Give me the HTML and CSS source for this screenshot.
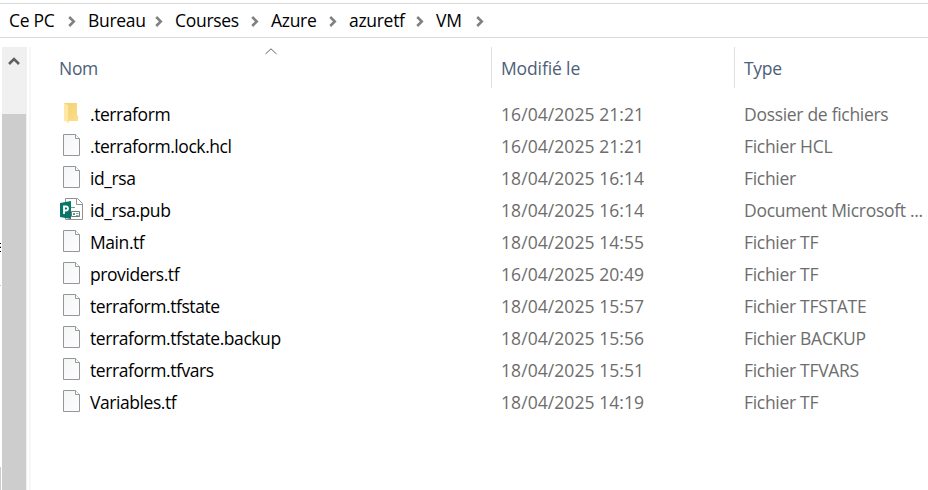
FILE: index.html
```html
<!DOCTYPE html>
<html lang="fr">
<head>
<meta charset="utf-8">
<title>VM</title>
<link rel="stylesheet" href="styles.css">
</head>
<body>
<svg class="defs" width="0" height="0">
  <defs>
    <linearGradient id="paper" x2="1" y2="1"><stop stop-color="#f4f5f6"/><stop offset="1" stop-color="#fdfdfe"/></linearGradient>
    <linearGradient id="gold" x2="1" y2="1"><stop stop-color="#f3cf70"/><stop offset="1" stop-color="#fbdf8c"/></linearGradient>
    <symbol id="chev" viewBox="0 0 8 11"><path d="M1.2 1 5.8 5.5 1.2 10" fill="none" stroke="#808080" stroke-width="2.5"/></symbol>
    <symbol id="file" viewBox="0 0 24 24"><path d="M3.5 1.5H15.5L19.5 5.5V22.5H3.5Z" fill="url(#paper)" stroke="#949698"/><path d="M15.5 1.5V5.5H19.5" fill="#fff" stroke="#949698"/></symbol>
    <symbol id="folder" viewBox="0 0 24 24"><g transform="translate(0 2)"><path d="M4 0H17V12L18 13V18H8L4 16Z" fill="url(#gold)"/><path d="M4 0 9 3V20.5L4 17.500Z" fill="#ffe8a6"/><path d="M8.500 3V18" stroke="#f3d27c" stroke-width=".7"/></g></symbol>
    <symbol id="pub" viewBox="0 0 24 24"><path d="M5.500 1.500H17.500L22.500 6.500V22.500H5.500Z" fill="#fff" stroke="#929292"/><path d="M16.500 1.500V7.500H22.500" fill="none" stroke="#929292"/><path d="M11 10.500H15" stroke="#65a99b"/><path d="M11.500 14.500H19.500V19.500H11.500Z" fill="none" stroke="#777"/><path d="M13 16H15V18H13Z" fill="#4ca28f"/><path d="M16 16.500H18.500M16 18.500H18.500" stroke="#4ca28f" stroke-width=".8"/><path d="M0 6 11 4V22L0 20Z" fill="#077568"/><path d="M4 17V9.500H6A2 2 0 0 1 6 13.500H4" fill="none" stroke="#fff" stroke-width="1.800"/></symbol>
  </defs>
</svg>
<nav class="path">
  <div class="crumb"><span>Ce PC</span><svg><use href="#chev"/></svg></div>
  <div class="crumb"><span>Bureau</span><svg><use href="#chev"/></svg></div>
  <div class="crumb"><span>Courses</span><svg><use href="#chev"/></svg></div>
  <div class="crumb"><span>Azure</span><svg><use href="#chev"/></svg></div>
  <div class="crumb"><span>azuretf</span><svg><use href="#chev"/></svg></div>
  <div class="crumb"><span>VM</span><svg><use href="#chev"/></svg></div>
</nav>
<main class="main">
  <div class="edge"><i class="ink"></i><i class="dot"></i><i class="stub"></i></div>
  <div class="scroll"><svg class="up" viewBox="0 0 12 10"><path d="M1 8 6 3 11 8" fill="none" stroke="#606060" stroke-width="2.600"/></svg><div class="thumb"></div></div>
  <div class="divider"></div>
  <section class="list">
    <div class="row head"><div>Nom</div><div>Modifié le</div><div>Type</div><svg class="sort" viewBox="0 0 12 7"><path d="M.5 6 6 .8 11.500 6" fill="none" stroke="#666"/></svg></div>
    <div class="row"><div class="name"><svg><use href="#folder"/></svg><span>.terraform</span></div><div class="date">16/04/2025 21:21</div><div class="type">Dossier de fichiers</div></div>
    <div class="row"><div class="name"><svg><use href="#file"/></svg><span>.terraform.lock.hcl</span></div><div class="date">16/04/2025 21:21</div><div class="type">Fichier HCL</div></div>
    <div class="row"><div class="name"><svg><use href="#file"/></svg><span>id_rsa</span></div><div class="date">18/04/2025 16:14</div><div class="type">Fichier</div></div>
    <div class="row"><div class="name"><svg><use href="#pub"/></svg><span>id_rsa.pub</span></div><div class="date">18/04/2025 16:14</div><div class="type">Document Microsoft ...</div></div>
    <div class="row"><div class="name"><svg><use href="#file"/></svg><span>Main.tf</span></div><div class="date">18/04/2025 14:55</div><div class="type">Fichier TF</div></div>
    <div class="row"><div class="name"><svg><use href="#file"/></svg><span>providers.tf</span></div><div class="date">16/04/2025 20:49</div><div class="type">Fichier TF</div></div>
    <div class="row"><div class="name"><svg><use href="#file"/></svg><span>terraform.tfstate</span></div><div class="date">18/04/2025 15:57</div><div class="type">Fichier TFSTATE</div></div>
    <div class="row"><div class="name"><svg><use href="#file"/></svg><span>terraform.tfstate.backup</span></div><div class="date">18/04/2025 15:56</div><div class="type">Fichier BACKUP</div></div>
    <div class="row"><div class="name"><svg><use href="#file"/></svg><span>terraform.tfvars</span></div><div class="date">18/04/2025 15:51</div><div class="type">Fichier TFVARS</div></div>
    <div class="row"><div class="name"><svg><use href="#file"/></svg><span>Variables.tf</span></div><div class="date">18/04/2025 14:19</div><div class="type">Fichier TF</div></div>
  </section>
</main>
</body>
</html>
```
FILE: styles.css
```css
* { box-sizing: border-box; }
body {
  margin: 0;
  height: 490px;
  overflow: hidden;
  background: #fff;
  color: #000;
  font: 17.5px/24px "Open Sans", "Noto Sans", sans-serif;
  letter-spacing: -0.3px;
  white-space: nowrap;
}
.defs { position: absolute; }
.path {
  display: grid;
  grid-template-columns: 79px 87px 96px 78px 87px 60px;
  align-items: center;
  height: 35px;
  margin-top: 3px;
  padding-left: 9px;
  border-top: 1px solid #d9d9d9;
  border-bottom: 1px solid #d9d9d9;
}
.crumb { display: flex; justify-content: space-between; align-items: center; padding-right: 12px; }
.crumb span { padding-bottom: 1px; }
.crumb svg { width: 8px; height: 11px; margin-top: 1px; }
.main { display: flex; height: 452px; }
.edge { display: flex; flex-direction: column; width: 2px; padding-top: 205px; }
.edge i { width: 1px; }
.ink { height: 9px; border-top: 1px solid #000; border-bottom: 1px solid #000; background: linear-gradient(#fff 2px, #6ed5ee 2px 3px, #000 3px 4px, #fff 4px); }
.dot { height: 1px; margin-top: 33px; background: #71e5ed; }
.stub { height: 23px; margin-top: 181px; background: #ccc; }
.scroll { width: 25px; margin-top: 9px; background: #f0f0f0; }
.up { display: block; width: 12px; height: 10px; margin: 9px 0 48px 6px; }
.thumb { width: 24px; height: 376px; background: #cdcdcd; }
.divider { width: 2px; margin: 9px 0 0 2px; background: #f7f7f7; }
.list { flex: 1; padding-top: 9px; }
.row {
  display: grid;
  grid-template-columns: 460px 243px 1fr;
  align-items: center;
  height: 32px;
}
.row > div { padding-left: 10px; }
.row > .name { display: flex; align-items: center; gap: 6px; padding-left: 29px; letter-spacing: -0.43px; }
.name svg { width: 24px; height: 24px; margin-bottom: 4px; }
.name span, .date, .type { padding-bottom: 2px; }
.date, .type { color: #6d6d6d; }
.date { letter-spacing: 0.07px; }
.head { position: relative; height: 41px; margin-bottom: 11px; color: #4c607a; }
.head > div { height: 41px; line-height: 43px; }
.head > div:first-child { padding-left: 28px; }
.head > div:not(:first-child) { border-left: 1px solid #e0e0e0; padding-left: 9px; }
.head > div:nth-child(2) { letter-spacing: -0.12px; }
.sort { position: absolute; left: 234px; top: 1px; width: 12px; height: 7px; }
```
